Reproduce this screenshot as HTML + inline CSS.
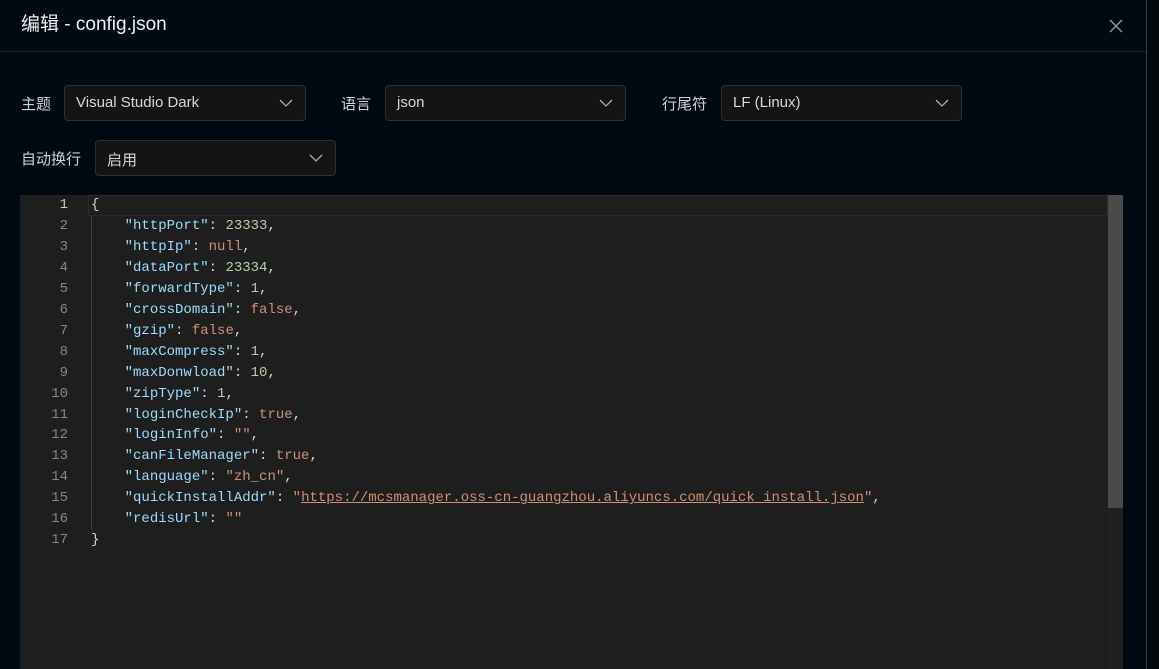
<!DOCTYPE html><html><head><meta charset="utf-8"><style>
*{margin:0;padding:0;box-sizing:border-box}
body{width:1159px;height:669px;overflow:hidden;background:#010a13;font-family:"Liberation Sans","Noto Sans CJK SC",sans-serif;position:relative;color:#e6e6e6}
.title{position:absolute;left:21px;top:9px;font-size:19px;color:#f0f0f0}
.close{position:absolute;left:1106px;top:16px;width:20px;height:20px}
.hr{position:absolute;left:0;top:51px;width:1146px;height:1px;background:#1e2731}
.side{position:absolute;left:1146px;top:0;width:13px;height:669px;background:#05080c;border-left:1px solid #27405c}
.lbl{position:absolute;font-size:15px;color:#d0d0d0}
.sel{position:absolute;height:36px;background:#141414;border:1px solid #303030;border-radius:4px;font-size:15px;color:#d8d8d8;padding:8px 11px}
.sel svg{position:absolute;right:12px;top:13px}
.ed{position:absolute;left:20px;top:195px;width:1103px;height:474px;background:#1e1e1e;overflow:hidden}
.gut{position:absolute;left:0;top:0;width:48px;text-align:right;font:14px/20.95px "Liberation Mono",monospace;color:#858585}
.code{position:absolute;left:71px;top:0;font:14px/20.95px "Liberation Mono",monospace;color:#d4d4d4;white-space:pre}
.k{color:#9cdcfe}.n{color:#b5cea8}.s{color:#ce9178}.u{color:#ce9178;text-decoration:underline}
.cur{position:absolute;left:68px;top:0;width:1020px;height:21px;border:1px solid #2a2a2a}
.sb{position:absolute;left:1088px;top:0;width:15px;height:313px;background:#4a4a4a}
.sbt{position:absolute;left:1088px;top:0;width:15px;height:474px;background:#2a2a2a33}
.guide{position:absolute;left:71px;top:21px;width:1px;height:314px;background:#404040}
</style></head><body>
<div class="title">编辑 - config.json</div>
<svg class="close" viewBox="0 0 20 20"><path d="M4 4L16 16M16 4L4 16" stroke="#9a9a9a" stroke-width="1.4"/></svg>
<div class="hr"></div>
<div class="side"></div>
<div class="lbl" style="left:21px;top:93px">主题</div>
<div class="sel" style="left:64px;top:85px;width:242px">Visual Studio Dark<svg width="14" height="9" viewBox="0 0 14 9"><path d="M1 1l6 6 6-6" fill="none" stroke="#aaa" stroke-width="1.3"/></svg></div>
<div class="lbl" style="left:341px;top:93px">语言</div>
<div class="sel" style="left:385px;top:85px;width:241px">json<svg width="14" height="9" viewBox="0 0 14 9"><path d="M1 1l6 6 6-6" fill="none" stroke="#aaa" stroke-width="1.3"/></svg></div>
<div class="lbl" style="left:662px;top:93px">行尾符</div>
<div class="sel" style="left:721px;top:85px;width:241px">LF (Linux)<svg width="14" height="9" viewBox="0 0 14 9"><path d="M1 1l6 6 6-6" fill="none" stroke="#aaa" stroke-width="1.3"/></svg></div>
<div class="lbl" style="left:21px;top:148px">自动换行</div>
<div class="sel" style="left:95px;top:140px;width:241px">启用<svg width="14" height="9" viewBox="0 0 14 9"><path d="M1 1l6 6 6-6" fill="none" stroke="#aaa" stroke-width="1.3"/></svg></div>
<div class="ed">
<div class="cur"></div>
<div class="guide"></div>
<div class="gut"><span style="color:#c6c6c6">1</span><br>2<br>3<br>4<br>5<br>6<br>7<br>8<br>9<br>10<br>11<br>12<br>13<br>14<br>15<br>16<br>17</div>
<div class="code">{
    <span class="k">"httpPort"</span>: <span class="n">23333</span>,
    <span class="k">"httpIp"</span>: <span class="s">null</span>,
    <span class="k">"dataPort"</span>: <span class="n">23334</span>,
    <span class="k">"forwardType"</span>: <span class="n">1</span>,
    <span class="k">"crossDomain"</span>: <span class="s">false</span>,
    <span class="k">"gzip"</span>: <span class="s">false</span>,
    <span class="k">"maxCompress"</span>: <span class="n">1</span>,
    <span class="k">"maxDonwload"</span>: <span class="n">10</span>,
    <span class="k">"zipType"</span>: <span class="n">1</span>,
    <span class="k">"loginCheckIp"</span>: <span class="s">true</span>,
    <span class="k">"loginInfo"</span>: <span class="s">""</span>,
    <span class="k">"canFileManager"</span>: <span class="s">true</span>,
    <span class="k">"language"</span>: <span class="s">"zh_cn"</span>,
    <span class="k">"quickInstallAddr"</span>: <span class="s">"</span><span class="u">https://mcsmanager.oss-cn-guangzhou.aliyuncs.com/quick_install.json</span><span class="s">"</span>,
    <span class="k">"redisUrl"</span>: <span class="s">""</span>
}</div>
<div class="sbt"></div>
<div class="sb"></div>
</div>
</body></html>
